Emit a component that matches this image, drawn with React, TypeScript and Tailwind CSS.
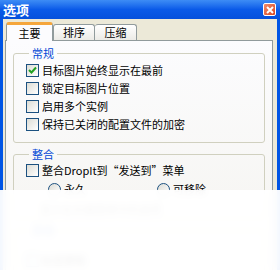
import React from "react";

const font = { fontFamily: '"Noto Sans CJK SC", "Liberation Sans", sans-serif' };

function Check({ checked, label }: { checked?: boolean; label: string }) {
  return (
    <div className="flex items-center h-[18px]">
      <div className="w-[13px] h-[13px] border border-[#1c5180] bg-gradient-to-br from-[#dcdcd5] to-[#ffffff] flex items-center justify-center shrink-0">
        {checked && (
          <svg width="9" height="9" viewBox="0 0 9 9">
            <path d="M1 4 L3.5 6.5 L8 1.5" stroke="#21a121" strokeWidth="2" fill="none" />
          </svg>
        )}
      </div>
      <span className="ml-[3px] text-[11px] leading-none text-black">{label}</span>
    </div>
  );
}

function Radio({ label }: { label: string }) {
  return (
    <div className="flex items-center">
      <div className="w-[13px] h-[13px] rounded-full border border-[#1c5180] bg-gradient-to-br from-[#dcdcd5] to-white" />
      <span className="ml-[3px] text-[11px] leading-none text-black">{label}</span>
    </div>
  );
}

export default function App() {
  return (
    <div className="relative w-[280px] h-[270px] overflow-hidden flex flex-col bg-[#0055e5]" style={font}>
      <div className="h-[19px] shrink-0 flex items-center justify-between pl-[3px] pr-[4px] bg-gradient-to-b from-[#3d8cf5] via-[#0a5ae8] to-[#0550dc]">
        <span className="text-white font-bold text-[13px] leading-[19px]">选项</span>
        <div className="w-[13px] h-[13px] rounded-[2px] border border-white bg-gradient-to-br from-[#f08a6a] to-[#d8431c] flex items-center justify-center">
          <svg width="8" height="8" viewBox="0 0 8 8">
            <path d="M1 1 L7 7 M7 1 L1 7" stroke="white" strokeWidth="2" />
          </svg>
        </div>
      </div>
      <div className="flex-1 flex mx-[3px] bg-[#ece9d8]">
        <div className="flex-1 flex flex-col pt-[3px] pl-[2px] pr-[4px]">
          <div className="flex items-end h-[18px] shrink-0 pl-[1px] relative z-10">
            <div className="w-[47px] h-[19px] -mb-[1px] bg-[#fcfcfe] border border-[#919b9c] border-b-0 border-t-[3px] border-t-[#f5a63c] rounded-t-[3px] flex items-center justify-center text-[11px] leading-none">主要</div>
            <div className="w-[42px] h-[16px] bg-gradient-to-b from-white to-[#ecebe6] border border-[#919b9c] border-b-0 rounded-t-[3px] flex items-center justify-center text-[11px] leading-none">排序</div>
            <div className="w-[42px] h-[16px] bg-gradient-to-b from-white to-[#ecebe6] border border-[#919b9c] border-b-0 border-l-0 rounded-t-[3px] flex items-center justify-center text-[11px] leading-none">压缩</div>
          </div>
          <div className="flex-1 bg-gradient-to-b from-[#fcfcfe] to-[#f4f3ee] border border-[#919b9c] px-[7px] pt-[5px] flex flex-col gap-[4px]">
            <fieldset className="border border-[#d0d0bf] rounded-[3px] pl-[12px] pt-0 h-[97px] shrink-0">
              <legend className="ml-[3px] px-[3px] text-[#0046d5] text-[11px] leading-[14px]">常规</legend>
              <div className="flex flex-col pt-[1px]">
                <Check checked label="目标图片始终显示在最前" />
                <Check label="锁定目标图片位置" />
                <Check label="启用多个实例" />
                <Check label="保持已关闭的配置文件的加密" />
              </div>
            </fieldset>
            <fieldset className="border border-[#d0d0bf] rounded-[3px] pl-[12px] h-[72px] shrink-0">
              <legend className="ml-[3px] px-[3px] text-[#0046d5] text-[11px] leading-[14px]">整合</legend>
              <div className="flex flex-col">
                <Check label="整合DropIt到“发送到”菜单" />
                <div className="flex pl-[22px] gap-[71px] mt-[4px]">
                  <Radio label="永久" />
                  <Radio label="可移除" />
                </div>
                <div className="mt-[8px] pl-[14px] text-[11px] leading-none text-[#555]">显示在右键菜单中的选项</div>
              </div>
            </fieldset>
            <fieldset className="border border-[#d0d0bf] rounded-[3px] pl-[12px] h-[60px] shrink-0">
              <legend className="ml-[3px] px-[3px] text-[#0046d5] text-[11px] leading-[14px]">其他</legend>
              <div className="flex flex-col pt-[14px]">
                <Check label="检查更新" />
              </div>
            </fieldset>
          </div>
        </div>
      </div>
      <div className="absolute left-0 right-0 top-[190px] bottom-0 bg-white/95 backdrop-blur-[3px]" />
    </div>
  );
}
